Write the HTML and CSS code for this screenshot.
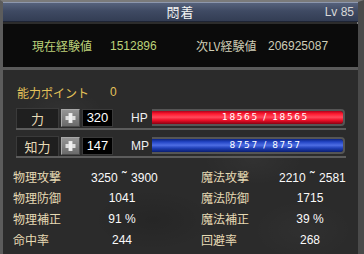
FILE: index.html
```html
<!DOCTYPE html>
<html lang="ja">
<head>
<meta charset="utf-8">
<link rel="stylesheet" href="styles.css">
</head>
<body>
<div class="window">
  <div class="title">
    <span class="title-name">悶着</span>
    <span class="title-lv">Lv 85</span>
  </div>
  <div class="exp">
    <span class="exp-label cur">現在経験値</span>
    <span class="exp-val cur">1512896</span>
    <span class="exp-label next">次LV経験値</span>
    <span class="exp-val next">206925087</span>
  </div>
  <div class="main">
    <div class="points">
      <span class="points-label">能力ポイント</span>
      <span class="points-val">0</span>
    </div>
    <div class="stat-row">
      <div class="attr">力</div>
      <div class="plus"><svg width="17" height="16" viewBox="0 0 17 16"><rect x="6.5" y="3" width="4" height="10" fill="#dedede"/><rect x="3.5" y="6" width="10" height="4" fill="#dedede"/><rect x="7" y="3.5" width="3" height="9" fill="#efefef"/></svg></div>
      <div class="attr-val">320</div>
      <div class="bar-label">HP</div>
      <div class="bar"><div class="bar-fill hp">18565 / 18565</div></div>
    </div>
    <div class="stat-row">
      <div class="attr">知力</div>
      <div class="plus"><svg width="17" height="16" viewBox="0 0 17 16"><rect x="6.5" y="3" width="4" height="10" fill="#dedede"/><rect x="3.5" y="6" width="10" height="4" fill="#dedede"/><rect x="7" y="3.5" width="3" height="9" fill="#efefef"/></svg></div>
      <div class="attr-val">147</div>
      <div class="bar-label">MP</div>
      <div class="bar"><div class="bar-fill mp">8757 / 8757</div></div>
    </div>
    <div class="stats">
      <span class="s-label">物理攻撃</span><span class="s-val">3250 <span class="tilde">˜</span> 3900</span><span></span><span class="s-label">魔法攻撃</span><span class="s-val">2210 <span class="tilde">˜</span> 2581</span>
      <span class="s-label">物理防御</span><span class="s-val">1041</span><span></span><span class="s-label">魔法防御</span><span class="s-val">1715</span>
      <span class="s-label">物理補正</span><span class="s-val">91 %</span><span></span><span class="s-label">魔法補正</span><span class="s-val">39 %</span>
      <span class="s-label">命中率</span><span class="s-val">244</span><span></span><span class="s-label">回避率</span><span class="s-val">268</span>
    </div>
  </div>
</div>
</body>
</html>
```

FILE: styles.css
```css
html, body {
  margin: 0;
  padding: 0;
  background: #1c1c1c;
}
.window {
  width: 364px;
  height: 254px;
  box-sizing: border-box;
  border-top: 2px solid #7a7a7a;
  border-left: 3px solid #5c5c5c;
  border-right: 6px solid #4a4a4a;
  box-shadow: inset 1px 0 0 #2a2a2a, inset -1px 0 0 #7c7c7c;
  background: #2c2c2c;
  font-family: "Noto Sans CJK JP", sans-serif;
  overflow: hidden;
  display: flex;
  flex-direction: column;
}
.title {
  height: 20px;
  box-sizing: border-box;
  border-top: 1px solid #8d97ad;
  border-bottom: 1px solid #1e2434;
  background: linear-gradient(to bottom, #56627c 0%, #3f4a63 45%, #333d54 100%);
  position: relative;
  display: flex;
  align-items: center;
  justify-content: center;
}
.title-name {
  color: #f4f4f4;
  font-size: 13px;
  line-height: 18px;
  letter-spacing: 1px;
}
.title-lv {
  position: absolute;
  right: 4px;
  top: 0;
  line-height: 18px;
  font-family: "Liberation Sans", sans-serif;
  font-size: 12px;
  color: #d8d8d8;
}
.exp {
  margin-top: 2px;
  height: 43px;
  background: #0b0b0b;
  border-bottom: 3px solid #5a5a5a;
  display: flex;
  align-items: center;
  font-size: 12px;
  line-height: 14px;
}
.exp-label.cur { margin-left: 29px; width: 78px; color: #bdd27a; }
.exp-val.cur { width: 86px; color: #bdd27a; font-family: "Liberation Sans", sans-serif; font-size: 12px; }
.exp-label.next { width: 72px; color: #cfcdb6; }
.exp-val.next { color: #cfcdb6; font-family: "Liberation Sans", sans-serif; font-size: 12px; }
.main {
  flex: 1;
  padding-top: 14px;
  background:
    radial-gradient(ellipse 40px 20px at 60px 40px, rgba(255,255,255,0.03), transparent),
    radial-gradient(ellipse 50px 25px at 250px 90px, rgba(255,255,255,0.03), transparent),
    radial-gradient(ellipse 60px 30px at 150px 150px, rgba(0,0,0,0.12), transparent),
    radial-gradient(ellipse 50px 30px at 300px 160px, rgba(255,255,255,0.025), transparent),
    #2b2b2b;
}
.points {
  display: flex;
  height: 16px;
  align-items: center;
  padding-left: 14px;
  font-size: 12px;
}
.points-label { width: 93px; color: #e4c25a; }
.points-val { color: #e4c25a; font-family: "Liberation Sans", sans-serif; }
.stat-row {
  display: flex;
  align-items: center;
  height: 20px;
  margin-left: 13px;
  width: 330px;
  margin-top: 8px;
  border-bottom: 2px solid #5c5c5c;
}
.stat-row + .stat-row { margin-top: 6px; }
.attr {
  width: 43px;
  height: 20px;
  box-sizing: border-box;
  background: #1f1f1f;
  border: 1px solid #3a3a3a;
  border-bottom: none;
  color: #e8dcb8;
  font-size: 13px;
  line-height: 19px;
  text-align: center;
}
.plus {
  width: 19px;
  height: 18px;
  margin-left: 2px;
  box-sizing: border-box;
  border: 1px solid #a8a8a8;
  border-right-color: #4a4a4a;
  border-bottom-color: #4a4a4a;
  background: linear-gradient(to bottom, #959595, #6a6a6a);
  display: flex;
  align-items: center;
  justify-content: center;
}
.attr-val {
  width: 31px;
  height: 18px;
  margin-left: 2px;
  box-sizing: border-box;
  background: #000;
  border: 1px solid #3a3a3a;
  color: #fff;
  font-family: "Liberation Sans", sans-serif;
  font-size: 13px;
  line-height: 16px;
  text-align: center;
}
.bar-label {
  width: 21px;
  margin-left: 18px;
  color: #f0f0f0;
  font-family: "Liberation Sans", sans-serif;
  font-size: 12px;
}
.bar {
  width: 193px;
  height: 17px;
  box-sizing: border-box;
  border: 2px solid #555;
  border-left: none;
  border-radius: 0 4px 4px 0;
  margin-top: -2px;
}
.bar-fill {
  height: 13px;
  box-sizing: border-box;
  padding-left: 36px;
  color: #fff;
  font-family: "DejaVu Sans", sans-serif;
  font-size: 9px;
  line-height: 13px;
  letter-spacing: 1.6px;
  text-align: center;
  border-radius: 0 3px 3px 0;
}
.bar-fill.hp {
  background: linear-gradient(to bottom, #b0001a 0%, #ff1a30 22%, #ff4a5c 48%, #f01028 70%, #8a0012 100%);
}
.bar-fill.mp {
  background: linear-gradient(to bottom, #0c2480 0%, #2244c4 22%, #4e6ee4 48%, #2040b8 70%, #0a1e70 100%);
}
.stats {
  display: grid;
  grid-template-columns: 78px 62px 48px 78px 62px;
  grid-auto-rows: 21px;
  margin-top: 8px;
  padding-left: 10px;
  align-items: center;
  font-size: 12px;
}
.s-label { color: #e6dab4; }
.s-val {
  color: #fafafa;
  text-align: center;
  font-family: "Liberation Sans", sans-serif;
  white-space: nowrap;
}
.tilde {
  font-size: 14px;
  padding: 0 1px;
}
```
